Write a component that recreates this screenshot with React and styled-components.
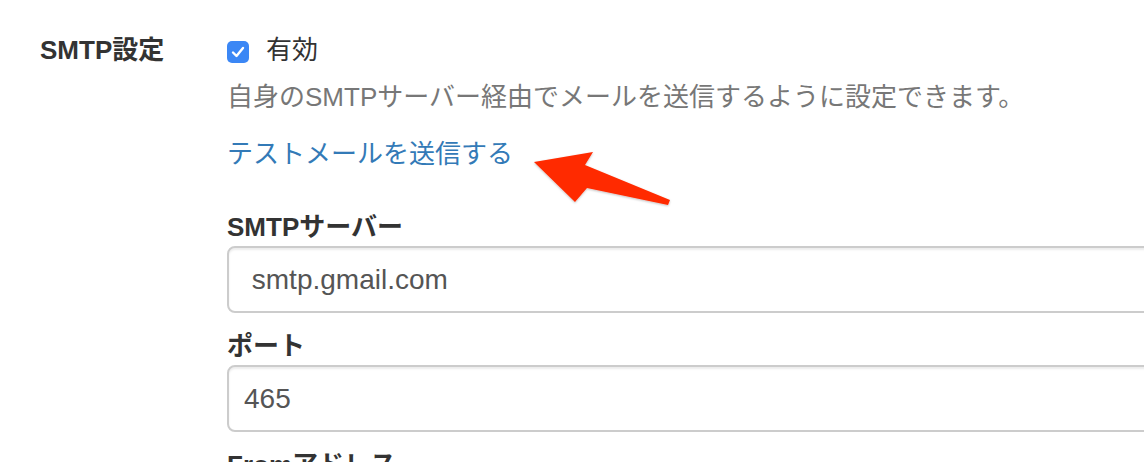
import React from "react";
import styled, { createGlobalStyle } from "styled-components";

const Global = createGlobalStyle`
  html, body { margin: 0; padding: 0; background: #fff; overflow: hidden; }
  body {
    font-family: "Liberation Sans", "Noto Sans CJK JP", sans-serif;
    color: #333;
    font-size: 26px;
    line-height: 37px;
  }
`;

const Page = styled.div`
  position: relative;
  width: 1144px;
  height: 462px;
  overflow: hidden;
  padding-top: 32px;
  box-sizing: border-box;
`;

const Row = styled.div`
  display: flex;
  align-items: flex-start;
`;

const SideLabel = styled.div`
  flex: 0 0 227px;
  padding-left: 40px;
  box-sizing: border-box;
  font-weight: bold;
`;

const Content = styled.div`
  flex: 0 0 1100px;
  display: flex;
  flex-direction: column;
`;

const CheckRow = styled.label`
  display: flex;
  align-items: center;
  gap: 17px;
  height: 37px;
`;

const Box = styled.span`
  width: 22px;
  height: 22px;
  border-radius: 5px;
  background: #3b87f5;
  display: inline-flex;
  align-items: center;
  justify-content: center;
  margin-top: 2px;
`;

const Help = styled.p`
  margin: 10px 0 0;
  color: #777;
`;

const Link = styled.a`
  margin-top: 20px;
  color: #337ab7;
  text-decoration: none;
  align-self: flex-start;
`;

const FieldLabel = styled.div`
  font-weight: bold;
  margin-top: ${(p) => p.$top}px;
`;

const Input = styled.input`
  box-sizing: border-box;
  width: 1000px;
  height: 67px;
  border: 2px solid #ccc;
  border-radius: 8px;
  box-shadow: inset 0 2px 2px rgba(0, 0, 0, 0.075);
  padding: 0 15px;
  font-family: "Liberation Sans", "Noto Sans CJK JP", sans-serif;
  font-size: 28px;
  color: #555;
  background: #fff;
  outline: none;
`;

const Arrow = styled.svg`
  position: absolute;
  left: 520px;
  top: 140px;
  overflow: visible;
`;

export default function App() {
  return (
    <Page>
      <Global />
      <Row>
        <SideLabel>SMTP設定</SideLabel>
        <Content>
          <CheckRow>
            <Box>
              <svg width="14" height="12" viewBox="0 0 14 12">
                <path d="M2 6.5 L5.5 10 L12 2" fill="none" stroke="#fff" strokeWidth="2.4" strokeLinecap="round" strokeLinejoin="round" />
              </svg>
            </Box>
            有効
          </CheckRow>
          <Help>自身のSMTPサーバー経由でメールを送信するように設定できます。</Help>
          <Link href="#">テストメールを送信する</Link>
          <FieldLabel $top={36}>SMTPサーバー</FieldLabel>
          <Input readOnly value=" smtp.gmail.com" />
          <FieldLabel $top={15}>ポート</FieldLabel>
          <Input readOnly value="465" />
          <FieldLabel $top={15}>Fromアドレス</FieldLabel>
        </Content>
      </Row>
      <Arrow width="160" height="80" viewBox="0 0 160 80">
        <defs>
          <filter id="sh" x="-20%" y="-20%" width="140%" height="140%">
            <feDropShadow dx="0" dy="1" stdDeviation="1.2" floodColor="#000" floodOpacity="0.25" />
          </filter>
        </defs>
        <polygon
          points="14,22 73,12 65,25 150,60 148,65 67,48 55,62"
          fill="#ff2a06"
          filter="url(#sh)"
        />
      </Arrow>
    </Page>
  );
}
